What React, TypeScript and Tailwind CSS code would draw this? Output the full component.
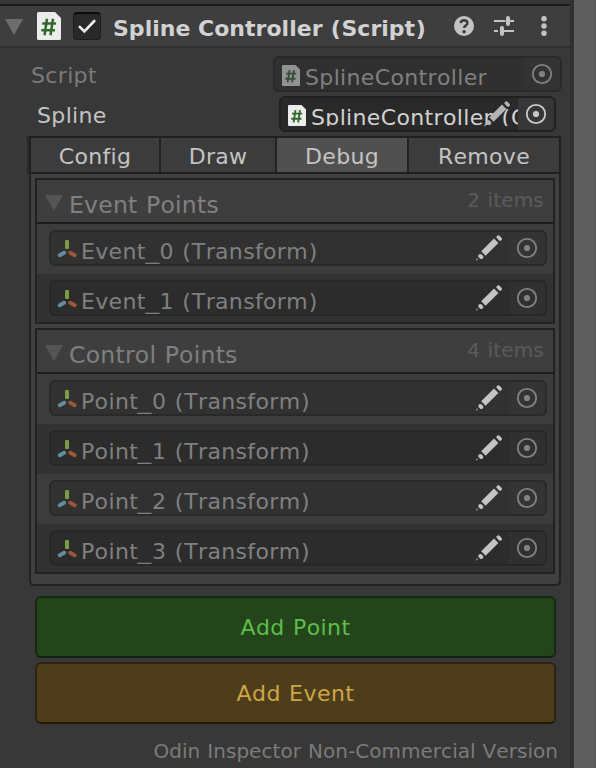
import type { ReactNode } from "react";

function ScriptIcon({ className, paper = "#ececec", mark = "#32682e" }: { className: string; paper?: string; mark?: string }) {
  return (
    <svg viewBox="0 0 24 28" preserveAspectRatio="none" className={className}>
      <path d="M1.500 0H18l6 6v20.500a1.500 1.500 0 0 1-1.500 1.500h-21A1.500 1.500 0 0 1 0 26.500V1.500A1.500 1.500 0 0 1 1.500 0Z" fill={paper} />
      <path d="M10 6.700 7.500 23.300M16 6.700l-2.500 16.600M5.300 11.500H19M4.300 18.300H18" stroke={mark} strokeWidth="2.500" fill="none" />
    </svg>
  );
}

function Triangle({ className }: { className: string }) {
  return (
    <svg viewBox="0 0 18 16" className={`h-4 w-[18px] shrink-0 ${className}`}>
      <path d="M0 0h18L9 16Z" fill="currentColor" />
    </svg>
  );
}

function Target({ className }: { className: string }) {
  return (
    <svg viewBox="0 0 22 22" className={`size-[22px] ${className}`}>
      <circle cx="11" cy="11" r="9.200" fill="none" stroke="currentColor" strokeWidth="1.800" />
      <circle cx="11" cy="11" r="3.100" fill="currentColor" />
    </svg>
  );
}

function Pencil({ className }: { className: string }) {
  return (
    <svg viewBox="0 0 26 26" className={`size-[26px] ${className}`} stroke="currentColor" fill="none">
      <path d="M7.400 18.500 20.200 5.700" strokeWidth="6.200" />
      <path d="m22.300 2.100 1.800 1.800" strokeWidth="3.600" strokeLinecap="round" />
      <path d="m4.300 21 1 1" strokeWidth="4" strokeLinecap="round" />
      <path d="m.200 25.200 1.400-1.400" strokeWidth="1.600" opacity=".6" />
    </svg>
  );
}

function TransformIcon() {
  return (
    <svg viewBox="0 0 20 20" className="mt-[7px] ml-[6px] size-5 shrink-0" strokeWidth="3.900" strokeLinecap="round" fill="none">
      <rect x="8" y="1" width="4" height="9" rx="1" fill="#7b9b49" />
      <path d="m7.200 13.700-4.500 2.500" stroke="#648ba0" />
      <path d="m13.200 13.700 4.500 2.500" stroke="#9d563c" />
    </svg>
  );
}

function Wide({ text }: { text: string }) {
  return (
    <>
      {text.split(/([_()])/).map((part, i) => {
        if (part === "_") return <span key={i} className="mx-[1.2px] inline-block scale-x-125">_</span>;
        if (part === "(" || part === ")") return <span key={i} className="px-[0.6px]">{part}</span>;
        return part;
      })}
    </>
  );
}

function ObjectRow({ name, alt }: { name: string; alt: boolean }) {
  return (
    <div className={`h-[50px] pt-[6px] pr-[6px] pl-3 last:h-12 ${alt ? "bg-[#323232]" : "bg-[#3c3c3c]"}`}>
      <div className={`flex h-9 overflow-hidden rounded-[6px] border-2 ${alt ? "border-[#272727] bg-[#2c2c2c]" : "border-[#292929] bg-[#313131]"}`}>
        <TransformIcon />
        <span className="ml-1 flex-1 pt-[4px] text-[22px] leading-8 tracking-[0.35px] whitespace-nowrap text-[#808080] [word-spacing:0.5px]">
          <Wide text={`${name} (Transform)`} />
        </span>
        <Pencil className="mt-[3px] mr-[7px] shrink-0 text-[#c4c4c4]" />
        <div className={`flex w-9 items-center justify-center ${alt ? "bg-[#303030]" : "bg-[#343434]"}`}>
          <Target className="text-[#828282]" />
        </div>
      </div>
    </div>
  );
}

function List({ title, items }: { title: string; items: string[] }) {
  return (
    <section className="border-2 border-[#222]">
      <header className="flex h-11 border-b-2 border-[#1d1d1d] bg-[#3e3e3e]">
        <Triangle className="mt-[15px] ml-2 text-[#555]" />
        <h2 className="ml-[6px] flex-1 pt-[4px] text-[23.5px] leading-[42px] tracking-[0.25px] text-[#808080] [word-spacing:0.75px]">{title}</h2>
        <span className="mr-[9px] text-[20px] leading-[40px] tracking-[0.2px] text-[#5b5b5b] [word-spacing:0.7px]">{items.length} items</span>
      </header>
      {items.map((n, i) => <ObjectRow key={n} name={n} alt={i % 2 === 1} />)}
    </section>
  );
}

function Tab({ className, children }: { className: string; children: ReactNode }) {
  return <button className={`h-[34px] pt-[3px] text-center text-[22px] leading-8 tracking-[0.3px] text-[#c4c4c4] ${className}`}>{children}</button>;
}

export default function App() {
  return (
    <main className="flex h-[768px] w-[596px] overflow-hidden bg-[#383838] font-['DejaVu_Sans',sans-serif] [font-kerning:none]">
      <div className="w-[570px] shrink-0">
        <header className="mt-1 flex h-11 border-t-2 border-b-2 border-t-[#1a1a1a] border-b-[#303030] bg-[#3e3e3e]">
          <Triangle className="mt-[13px] ml-[5px] text-[#6d6d6d]" />
          <ScriptIcon className="mt-[6px] ml-[14px] h-7 w-6 shrink-0" />
          <div className="mt-[6px] ml-3 size-7 shrink-0 rounded-[4px] border border-t-2 border-[#1d1d1d] border-t-[#0d0d0d] bg-[#292929]">
            <svg viewBox="0 0 26 25" className="h-[25px] w-[26px]">
              <path d="m5.700 12.800 4.700 4.700L20.300 7" fill="none" stroke="#eee" strokeWidth="2.600" strokeLinecap="round" />
            </svg>
          </div>
          <h1 className="ml-3 flex-1 pt-[3px] text-[22px] leading-10 font-bold tracking-[0.02px] whitespace-nowrap text-[#d2d2d2]">
            <Wide text="Spline Controller (Script)" />
          </h1>
          <svg viewBox="0 0 20 20" className="mt-[10px] size-5 shrink-0">
            <circle cx="10" cy="10" r="10" fill="#c4c4c4" />
            <path d="M6.700 7.200q.200-3 3.500-3 3.100.100 3.200 2.700 0 1.500-1.700 2.700-1.500 1-1.500 2.400" fill="none" stroke="#3e3e3e" strokeWidth="2.500" />
            <circle cx="10.100" cy="15.700" r="1.800" fill="#3e3e3e" />
          </svg>
          <svg viewBox="0 0 20 20" className="mt-[10px] ml-5 size-5 shrink-0" stroke="#c4c4c4" fill="none">
            <path d="M0 5h11.500M16 5h4M0 15h4M8 15h12" strokeWidth="2" />
            <path d="M14 2v6M8 12v6" strokeWidth="4" strokeLinecap="round" />
          </svg>
          <svg viewBox="0 0 6 20" className="mt-[10px] mr-[23px] ml-[27px] h-5 w-[6px] shrink-0" fill="#c4c4c4">
            <circle cx="3" cy="2.700" r="2.700" /><circle cx="3" cy="10" r="2.700" /><circle cx="3" cy="17.300" r="2.700" />
          </svg>
        </header>

        <div className="mt-2 flex h-9 pl-[31px]">
          <span className="w-[242px] pt-[2px] text-[22px] leading-9 tracking-[0.35px] text-[#7b7b7b]">Script</span>
          <div className="flex w-[289px] overflow-hidden rounded-[6px] border-2 border-[#292929] bg-[#303030]">
            <ScriptIcon className="mt-[7px] ml-[7px] h-[21px] w-[18px] shrink-0" paper="#929292" mark="#35503a" />
            <span className="ml-[5px] flex-1 pt-[4px] text-[22px] leading-8 tracking-[0.35px] text-[#808080]">SplineController</span>
            <div className="flex w-9 items-center justify-center bg-[#333]"><Target className="text-[#828282]" /></div>
          </div>
        </div>

        <div className="mt-1 flex h-9 pl-[37px]">
          <span className="w-[242px] pt-[2px] text-[22px] leading-9 tracking-[0.35px] text-[#c4c4c4]">Spline</span>
          <div className="relative flex w-[277px] overflow-hidden rounded-[6px] border-2 border-[#202020] bg-[#292929]">
            <ScriptIcon className="mt-[7px] ml-[7px] h-[21px] w-[18px] shrink-0" />
            <span className="ml-[5px] h-7 min-w-0 flex-1 overflow-hidden pt-[4px] text-[22px] leading-8 tracking-[0.35px] whitespace-nowrap text-[#d2d2d2] [word-spacing:0.5px]">
              <Wide text="SplineController (C" />
            </span>
            <div className="flex w-9 shrink-0 items-center justify-center bg-[#373737]"><Target className="text-[#c8c8c8]" /></div>
            <Pencil className="absolute top-[3px] left-[203px] text-[#b4b4b4]" />
          </div>
        </div>

        <div className="mt-1 ml-[29px] h-[450px] w-[532px]">
          <nav className="flex h-[38px] border-2 border-[#202020] bg-[#3c3c3c] shadow-[-2px_0_#292929]">
            <Tab className="w-[130px] border-r-2 border-[#222]">Config</Tab>
            <Tab className="w-[116px] border-r-2 border-[#222]">Draw</Tab>
            <Tab className="w-[132px] border-r-2 border-[#222] bg-[#505050]">Debug</Tab>
            <Tab className="flex-1">Remove</Tab>
          </nav>
          <div className="flex h-[412px] flex-col gap-1 rounded-b-[5px] border-x-2 border-b-2 border-[#222] bg-[#404040] px-1 pt-1">
            <List title="Event Points" items={["Event_0", "Event_1"]} />
            <List title="Control Points" items={["Point_0", "Point_1", "Point_2", "Point_3"]} />
          </div>
        </div>

        <div className="mt-[10px] ml-[35px] flex w-[521px] flex-col gap-1">
          <button className="h-[62px] rounded-[6px] border-2 border-[#152812] border-b-[#10200d] bg-[#24451b] text-[22px] tracking-[0.45px] text-[#5fbd49] [word-spacing:0.75px]">Add Point</button>
          <button className="h-[62px] rounded-[6px] border-2 border-[#2c2311] border-b-[#211909] bg-[#4d3d1b] text-[22px] tracking-[0.45px] text-[#cda646] [word-spacing:0.75px]">Add Event</button>
        </div>
        <footer className="mt-[11px] mr-3 text-right text-[20px] leading-8 tracking-[0.04px] text-[#7b7b7b] [word-spacing:0.6px]">Odin Inspector Non-Commercial Version</footer>
      </div>
      <div className="w-1 bg-[#303030]" />
      <div className="w-5 bg-[#5f5f5f]" />
      <div className="w-[2px] bg-[#595959]" />
    </main>
  );
}
